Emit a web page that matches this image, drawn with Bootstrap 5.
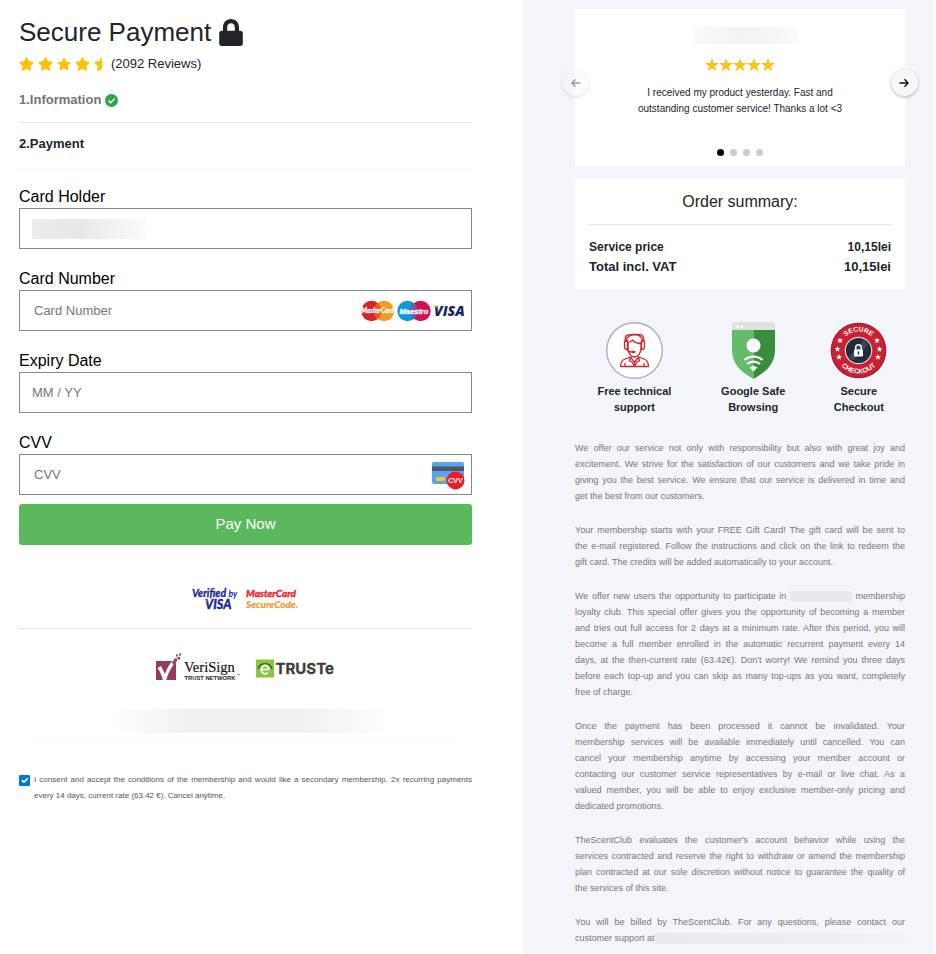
<!DOCTYPE html>
<html lang="en">
<head>
<meta charset="utf-8">
<meta name="viewport" content="width=device-width, initial-scale=1">
<title>Secure Payment</title>
<link href="https://cdn.jsdelivr.net/npm/bootstrap@5.3.0/dist/css/bootstrap.min.css" rel="stylesheet">
<style>
  body { font-family: "Liberation Sans", Arial, sans-serif; font-size: 13px; line-height: 20px; color: #212529; background: #fff; padding-right: 2px; }
  svg { display: block; flex: none; }
  hr { margin: 0; border-top: 1px solid #e6e6e6; opacity: 1; }
  .hr-faint { border-color: #f7f7f7; }
  .pay-col { width: 56%; padding: 13px 51px 24px 19px; }
  .side-col { width: 44%; padding: 9px 29px 7px 52px; background: #f4f5fa; }
  .page-title { font-size: 26px; line-height: 38px; }
  .rating { line-height: 26px; gap: 4px; }
  .rating span { margin-left: 5px; }
  .step { line-height: 20px; }
  .step-done { color: #6c757d; margin: 13px 0 12px; }
  .step-now { margin: 11px 0 14px; }
  .fields { padding-top: 16px; }
  .field-name { font-size: 16px; line-height: 23px; color: #000; display: block; }
  .field-box { margin-bottom: 18px; }
  .field-box.last { margin-bottom: 9px; }
  .field-box .form-control { height: 41px; border: 1px solid #888; border-radius: 0; font-size: 13px; padding: 0 14px; }
  .field-box .form-control.tight { padding-left: 12px; }
  .form-control::placeholder { color: #777; }
  .over-end { right: 7px; }
  .smudge-name { left: 13px; width: 113px; height: 20px; background: linear-gradient(90deg, #ececec, #e7e7e7 40%, #efefef 65%, #fbfbfb); }
  .btn-pay { height: 41px; background: #5cb85c; color: #fff; font-size: 15px; border-radius: 3px; border: 0; padding: 0; }
  .btn-pay:hover { background: #4cae4c; color: #fff; }
  .logos-a { padding: 42px 0 17px; gap: 8px; }
  .logos-b { padding: 24px 0 25px; gap: 15px; }
  .smudge-wide { width: 265px; height: 24px; margin: 0 auto 8px; background: linear-gradient(90deg, #fdfdfd, #f1f1f1 25%, #f1f1f0 70%, #fdfdfd); position: relative; left: 6px; }
  .consent { font-size: 8px; line-height: 16px; color: #555; padding-top: 30px; gap: 4px; text-align: justify; }
  .consent .form-check-input { width: 11px; height: 11px; margin: 3px 0 0; border-radius: 1px; flex: none; float: none; }
  .consent .form-check-input:checked { background-color: #0078d7; border-color: #0078d7; background-size: 11px; }
  .review { min-height: 157px; padding: 18px 13px 9px; background: #fff; }
  .smudge-author { width: 105px; height: 17px; margin: 0 auto 14px; background: linear-gradient(90deg, #fafaf9, #f4f3ef 45%, #f6f5f2 70%, #fbfbfa); position: relative; left: 6px; }
  .review-text { font-size: 10px; line-height: 16px; width: 212px; margin: 13px auto 32px; }
  .dots { gap: 6px; }
  .dots button { width: 7px; height: 7px; border: 0; padding: 0; border-radius: 50%; background: #ccc; }
  .dots button.on { background: #000; }
  .arrow-btn { width: 27px; height: 27px; border: 0; padding: 0; border-radius: 50%; background: #f6f7fb; box-shadow: 0 1px 3px rgba(0,0,0,.3); top: 60px; color: #111; }
  .arrow-prev { left: -13px; opacity: .4; }
  .arrow-next { right: -13px; }
  .summary { background: #fff; border-radius: 3px; margin-top: 13px; padding: 11px 13px 12px; }
  .summary h2 { font-size: 16px; line-height: 24px; margin: 0 0 10px; }
  .summary table { width: 100%; margin-top: 12px; font-weight: bold; }
  .summary th, .summary td { padding: 0 1px; font-weight: bold; line-height: 20px; }
  .small-line { font-size: 12px; }
  .trust { padding: 33px 0 25px; }
  .trust-item { font-size: 11px; line-height: 16px; font-weight: bold; width: 36%; padding: 0 16px; }
  .trust-item.slim { width: 28%; }
  .trust-item svg { margin-bottom: 4px; }
  .terms { font-size: 9px; line-height: 16px; color: #777; text-align: justify; }
  .terms p { margin: 0 0 18px; }
  .fill-line { text-align-last: justify; }
  .smudge-club { display: inline-block; width: 62px; height: 11px; background: #e8e9ed; vertical-align: middle; }
  .smudge-mail { height: 11px; background: linear-gradient(90deg, #e9eaee, #ecedf1 50%, #f2f3f7); }
</style>
<script src="https://cdn.jsdelivr.net/npm/bootstrap@5.3.0/dist/js/bootstrap.bundle.min.js"></script>
</head>
<body>
<svg width="0" height="0" class="position-absolute" aria-hidden="true">
  <symbol id="star" viewBox="0 0 576 512"><path d="M259 18 194 150 48 171c-26 4-37 36-18 55l106 103-25 145c-5 26 23 46 46 34l131-69 131 69c23 12 51-8 46-34l-25-145 106-103c19-19 8-51-18-55l-146-21L317 18c-12-24-46-24-58 0z"/></symbol>
  <symbol id="star-sharp" viewBox="0 0 20 20"><path d="M10 0 12.6 7H20l-5.800 4.700L16.300 19 10 14.800 3.700 19l2.100-7.300L0 7h7.400z"/></symbol>
</svg>

<div class="d-flex min-vh-100">
  <main class="pay-col">
    <h1 class="page-title d-flex align-items-center gap-2 fw-normal mb-0">Secure Payment
      <svg width="24" height="27" viewBox="0 0 448 512" aria-hidden="true"><path fill="#212529" d="M400 224h-24v-72C376 68 308 0 224 0S72 68 72 152v72H48c-27 0-48 21-48 48v192c0 27 21 48 48 48h352c27 0 48-21 48-48V272c0-27-21-48-48-48zm-104 0H152v-72c0-40 32-72 72-72s72 32 72 72v72z"/></svg>
    </h1>
    <div class="rating d-flex align-items-center">
      <svg width="15" height="14" fill="#ffc107"><use href="#star"/></svg>
      <svg width="15" height="14" fill="#ffc107"><use href="#star"/></svg>
      <svg width="14" height="14" fill="#ffc107"><use href="#star"/></svg>
      <svg width="15" height="14" fill="#ffc107"><use href="#star"/></svg>
      <svg width="8" height="14" viewBox="0 0 288 512" fill="#ffc107"><path d="M288 0c-11 0-23 6-29 18L194 150 48 171c-26 4-37 36-18 55l106 103-25 145c-5 26 23 46 46 34l131-69z"/></svg>
      <span>(2092 Reviews)</span>
    </div>
    <div class="step step-done d-flex align-items-center gap-1 fw-bold">1.Information
      <svg width="13" height="13" viewBox="0 0 13 13" aria-hidden="true"><circle cx="6.500" cy="6.500" r="6.500" fill="#28a745"/><path d="m3.500 6.600 2.200 2.100 3.900-3.900" fill="none" stroke="#fff" stroke-width="1.600"/></svg>
    </div>
    <hr>
    <div class="step step-now fw-bold">2.Payment</div>
    <hr class="hr-faint">

    <form class="fields">
      <label class="field-name" for="holder">Card Holder</label>
      <div class="field-box position-relative d-flex align-items-center">
        <input class="form-control" id="holder" type="text">
        <span class="smudge-name position-absolute"></span>
      </div>
      <label class="field-name" for="number">Card Number</label>
      <div class="field-box position-relative d-flex align-items-center">
        <input class="form-control" id="number" type="text" placeholder="Card Number">
        <svg class="over-end position-absolute" width="104" height="22" viewBox="0 0 104 22" role="img" aria-label="MasterCard, Maestro, Visa">
          <circle cx="10.500" cy="11" r="10.200" fill="#d8232a"/><circle cx="23" cy="11" r="10.200" fill="#f7991c"/>
          <path d="M16.700 3a10.200 10.200 0 0 1 0 16 10.200 10.200 0 0 1 0-16z" fill="#ea5a21"/>
          <text x="16.500" y="13.400" text-anchor="middle" font-family="Lato, sans-serif" font-size="6.500" font-weight="bold" font-style="italic" fill="#fff" stroke="#fff" stroke-width=".3">MasterCard</text>
          <circle cx="46.500" cy="11" r="10.200" fill="#0a9ad7"/><circle cx="59.500" cy="11" r="10.200" fill="#d3114f"/>
          <path d="M53 3a10.200 10.200 0 0 1 0 16 10.200 10.200 0 0 1 0-16z" fill="#7a55a0"/>
          <text x="53" y="13.700" text-anchor="middle" font-family="Liberation Sans, sans-serif" font-size="7.500" font-weight="bold" font-style="italic" fill="#fff" stroke="#fff" stroke-width=".3">Maestro</text>
          <text x="73" y="16" font-family="Open Sans, sans-serif" font-size="14" font-weight="800" font-style="italic" fill="#18275e">VISA</text>
          <path d="M72 5.500h3.500l2 4.500c-1-2-3-3.600-5.500-4.500z" fill="#f4a51c"/>
        </svg>
      </div>
      <label class="field-name" for="expiry">Expiry Date</label>
      <div class="field-box position-relative">
        <input class="form-control tight" id="expiry" type="text" placeholder="MM / YY">
      </div>
      <label class="field-name" for="cvv">CVV</label>
      <div class="field-box last position-relative d-flex align-items-center">
        <input class="form-control" id="cvv" type="text" placeholder="CVV">
        <svg class="over-end position-absolute" width="33" height="30" viewBox="0 0 33 30" aria-hidden="true">
          <rect x="0" y="2" width="32" height="22" rx="2" fill="#5aa2f5"/><rect y="6.500" width="32" height="4.500" fill="#505860"/>
          <rect x="4" y="17" width="9" height="4" rx="1" fill="#f6c713"/><circle cx="23.500" cy="20.500" r="9" fill="#ec1c24"/>
          <text x="23.500" y="23.400" text-anchor="middle" font-family="Liberation Sans, sans-serif" font-size="7" font-weight="bold" fill="#fff">CVV</text>
        </svg>
      </div>
      <button class="btn btn-pay w-100" type="button">Pay Now</button>

      <div class="logos-a d-flex justify-content-center">
        <svg width="46" height="24" viewBox="0 0 46 24" role="img" aria-label="Verified by Visa">
          <g font-family="Lato, sans-serif" font-style="italic" font-weight="bold" fill="#17269b" stroke="#17269b" stroke-width=".3">
            <text x="0" y="9.500" font-size="10.500">Verified</text>
            <text x="36.500" y="9.500" font-size="8.500" stroke="none">by</text>
            <text x="13" y="21.500" font-size="12.500" font-weight="900">VISA</text></g>
          <path d="M11 12.500h3.500l1.800 4c-1-2-3-3.400-5.300-4z" fill="#f7a01b"/>
        </svg>
        <svg width="54" height="24" viewBox="0 0 54 24" role="img" aria-label="MasterCard SecureCode">
          <g font-family="Lato, sans-serif" font-style="italic" font-weight="bold" font-size="10">
            <text x="0" y="10" fill="#ed1c24" stroke="#ed1c24" stroke-width=".4">MasterCard</text>
            <text x="0" y="20.500" fill="#f7941d" stroke="#f7941d" stroke-width=".2">SecureCode.</text></g>
        </svg>
      </div>
      <hr>
      <div class="logos-b d-flex justify-content-center align-items-center">
        <svg width="85" height="31" viewBox="0 0 85 31" role="img" aria-label="VeriSign Trust Network">
          <path d="M0 8h20v19H0z" fill="#983b5b"/>
          <path d="m1.500 15 3.500-2 4 8c2-6 5-11 9-15l4 1c-6 5-10 13-12 21H7C6 23 4 18 1.500 15z" fill="#fff"/>
          <path d="M18 5.500h3v3h-3zM21.500 4h2.500v2.500h-2.500zM20 1.500h2v2h-2zM23 .5h2v2h-2zM16 9l2-2 2 2-3 3z" fill="#983b5b"/>
          <text x="28" y="18.500" font-family="Liberation Serif, serif" font-size="14.500" fill="#161616" stroke="#161616" stroke-width=".2">VeriSign</text>
          <text x="28.500" y="26.500" font-family="Liberation Sans, sans-serif" font-size="5.800" font-weight="bold" fill="#222">TRUST NETWORK</text>
          <path d="M81 21.500h3" stroke="#777" stroke-width=".7"/>
        </svg>
        <svg width="80" height="31" viewBox="0 0 80 31" role="img" aria-label="TRUSTe">
          <rect x="0" y="6.500" width="18" height="18" fill="#8cc63f"/>
          <path d="M2 16a7.200 7 0 0 1 14 0" fill="none" stroke="#3d6b2a" stroke-width="1.500"/>
          <path d="M5.700 16.500h7.200a3.800 4.200 0 1 0-1.200 3.200" fill="none" stroke="#fff" stroke-width="1.700"/>
          <text x="19.500" y="21" font-family="Inter, sans-serif" font-size="15" font-weight="bold" fill="#3e3e40" stroke="#3e3e40" stroke-width=".3">TRUSTe</text>
        </svg>
      </div>
      <div class="smudge-wide"></div>
      <hr class="hr-faint mx-3">
      <div class="consent d-flex">
        <input class="form-check-input" type="checkbox" id="consent" checked>
        <label for="consent">I consent and accept the conditions of the membership and would like a secondary membership. 2x recurring payments every 14 days, current rate (63.42 €). Cancel anytime.</label>
      </div>
    </form>
  </main>

  <aside class="side-col">
    <section class="review position-relative text-center">
      <div class="smudge-author"></div>
      <div class="d-flex justify-content-center">
        <svg width="14" height="14" fill="#f5c518"><use href="#star-sharp"/></svg><svg width="14" height="14" fill="#f5c518"><use href="#star-sharp"/></svg><svg width="14" height="14" fill="#f5c518"><use href="#star-sharp"/></svg><svg width="14" height="14" fill="#f5c518"><use href="#star-sharp"/></svg><svg width="14" height="14" fill="#f5c518"><use href="#star-sharp"/></svg>
      </div>
      <p class="review-text">I received my product yesterday. Fast and outstanding customer service! Thanks a lot &lt;3</p>
      <div class="dots d-flex justify-content-center">
        <button type="button" class="on" aria-label="Review 1"></button><button type="button" aria-label="Review 2"></button><button type="button" aria-label="Review 3"></button><button type="button" aria-label="Review 4"></button>
      </div>
      <button type="button" class="arrow-btn arrow-prev position-absolute d-flex align-items-center justify-content-center" aria-label="Previous">
        <svg width="10" height="10" viewBox="0 0 10 10" fill="none" stroke="currentColor" stroke-width="1.400"><path d="M9.500 5H1M4.500 1.200.9 5l3.600 3.800"/></svg></button>
      <button type="button" class="arrow-btn arrow-next position-absolute d-flex align-items-center justify-content-center" aria-label="Next">
        <svg width="10" height="10" viewBox="0 0 10 10" fill="none" stroke="currentColor" stroke-width="1.400"><path d="M.5 5H9M5.500 1.200 9.100 5 5.500 8.800"/></svg></button>
    </section>

    <section class="summary">
      <h2 class="text-center fw-normal">Order summary:</h2>
      <hr>
      <table>
        <tr class="small-line"><th scope="row">Service price</th><td class="text-end">10,15lei</td></tr>
        <tr><th scope="row">Total incl. VAT</th><td class="text-end">10,15lei</td></tr>
      </table>
    </section>

    <section class="trust d-flex text-center">
      <div class="trust-item d-flex flex-column align-items-center">
        <svg width="57" height="57" viewBox="0 0 57 57" aria-hidden="true">
          <circle cx="28.500" cy="28.500" r="27.800" fill="#fff" stroke="#a9b0c6" stroke-width="1.400"/>
          <g fill="none" stroke="#cf2730" stroke-width="1.300" stroke-linejoin="round">
            <path d="M22 20v6c0 5 3 9 6.500 9s6.500-4 6.500-9v-6"/>
            <path d="M21.500 21c3-1 4-2 5-3 2 2.500 5 3.500 9 3.500"/>
            <path d="M20 20c0-10 17-10 17 0M18.500 20.500c0-1.500 1-2 3-2v9c-2.500 0-3-1-3-2.500zM38.500 20.500c0-1.500-1-2-3-2v9c2.500 0 3-1 3-2.500z"/>
            <path d="M19 19c0-8 4-6 9.500-6.500S38 12 38 19M20.500 27c1 2 3 3 6 3"/>
            <path d="M14.500 44.500c0-5 2-6.500 4.500-7.500l5.500-2 4 5.500 4-5.500 5.500 2c2.500 1 4.500 2.500 4.500 7.500zM28.500 40.500v4M24.500 35l-1 4 2.500 1 2.500 4.500 2.500-4.500 2.500-1-1-4M19 41v3M38 41v3"/>
          </g><ellipse cx="27.500" cy="30" rx="2" ry="1.300" fill="#cf2730"/>
        </svg>
        Free technical support
      </div>
      <div class="trust-item d-flex flex-column align-items-center">
        <svg width="43" height="57" viewBox="0 0 43 57" aria-hidden="true">
          <path d="M0 8h21.500v49C9 50 0 42 0 28z" fill="#66bb6a"/><path d="M21.500 8H43v20c0 14-9 22-21.500 29z" fill="#388e3c"/>
          <path d="M0 8V3a3 3 0 0 1 3-3h37a3 3 0 0 1 3 3v5z" fill="#e0e0e0"/><circle cx="5.500" cy="4.500" r="1.300" fill="#fff"/><circle cx="10" cy="4.500" r="1.300" fill="#fff"/>
          <circle cx="21.500" cy="23.500" r="7" fill="#fff"/>
          <g fill="none" stroke="#fff" stroke-width="2.200"><path d="M12.500 38c5-4.500 13-4.500 18 0M15 42c3.800-3.300 9.200-3.300 13 0"/></g>
          <path d="M17.500 45.500c2.500-2 5.500-2 8 0l-4 4z" fill="#fff"/>
        </svg>
        Google Safe Browsing
      </div>
      <div class="trust-item slim d-flex flex-column align-items-center">
        <svg width="57" height="57" viewBox="0 0 57 57" role="img" aria-label="Secure Checkout">
          <defs><path id="arc-top" d="M9.500 28.500a19 19 0 0 1 38 0"/><path id="arc-low" d="M5.500 28.500a23 23 0 0 0 46 0"/></defs>
          <circle cx="28.500" cy="28.500" r="27.800" fill="#8e1d2b"/><circle cx="28.500" cy="28.500" r="27" fill="#cb1f33"/>
          <circle cx="28.500" cy="28.500" r="13.800" fill="#d5d8dc"/><circle cx="28.500" cy="28.500" r="12.600" fill="#232c38"/>
          <path d="M19 35 34 18l4 4-15 17z" fill="#3d4854"/>
          <g font-family="Liberation Sans, sans-serif" font-size="6.800" font-weight="bold" fill="#fff" text-anchor="middle">
            <text><textPath href="#arc-top" startOffset="50%">SECURE</textPath></text>
            <text><textPath href="#arc-low" startOffset="50%">CHECKOUT</textPath></text></g>
          <g fill="#fff"><svg x="7" y="15.500" width="6" height="6"><use href="#star-sharp"/></svg><svg x="4.500" y="24" width="6" height="6"><use href="#star-sharp"/></svg><svg x="6" y="32" width="6" height="6"><use href="#star-sharp"/></svg>
          <svg x="44" y="15.500" width="6" height="6"><use href="#star-sharp"/></svg><svg x="46.500" y="24" width="6" height="6"><use href="#star-sharp"/></svg><svg x="45" y="32" width="6" height="6"><use href="#star-sharp"/></svg></g>
          <rect x="24" y="27.500" width="9" height="7" rx=".8" fill="#fff"/><path d="M25.700 28v-2.500a2.800 2.800 0 0 1 5.600 0V28" fill="none" stroke="#fff" stroke-width="1.500"/><path d="M28.500 29.500v3" stroke="#232c38" stroke-width="1.400"/>
        </svg>
        <span>Secure<br>Checkout</span>
      </div>
    </section>

    <section class="terms">
      <p>We offer our service not only with responsibility but also with great joy and excitement. We strive for the satisfaction of our customers and we take pride in giving you the best service. We ensure that our service is delivered in time and get&nbsp;the best from our customers.</p>
      <p>Your membership starts with your FREE Gift Card! The gift card will be sent to the&nbsp;e&#8209;mail registered. Follow the instructions and click on the link to redeem the gift&nbsp;card. The credits will be added automatically to your account.</p>
      <p>We offer new users the opportunity to participate in <span class="smudge-club"></span> membership loyalty club. This special offer gives you the opportunity of becoming a member and tries out full access for 2 days at a minimum rate. After this period, you will become a full member enrolled in the automatic recurrent payment every 14 days,&nbsp;at the then-current rate (63.42€). Don't worry! We remind you three days before&nbsp;each top-up and you can skip as many top-ups as you want, completely free&nbsp;of&nbsp;charge.</p>
      <p>Once the payment has been processed it cannot be invalidated. Your membership&nbsp;services will be available immediately until cancelled. You can cancel&nbsp;your membership anytime by accessing your member account or contacting&nbsp;our customer service representatives by e-mail or live chat. As a valued&nbsp;member, you will be able to enjoy exclusive member-only pricing and dedicated&nbsp;promotions.</p>
      <p>TheScentClub evaluates the customer's account behavior while using the services&nbsp;contracted and reserve the right to withdraw or amend the membership plan&nbsp;contracted at our sole discretion without notice to guarantee the quality of the&nbsp;services of this site.</p>
      <div class="fill-line">You will be billed by TheScentClub. For any questions, please contact our</div>
      <div class="d-flex align-items-center"><span>customer support at</span><span class="smudge-mail flex-grow-1"></span></div>
    </section>
  </aside>
</div>
</body>
</html>
